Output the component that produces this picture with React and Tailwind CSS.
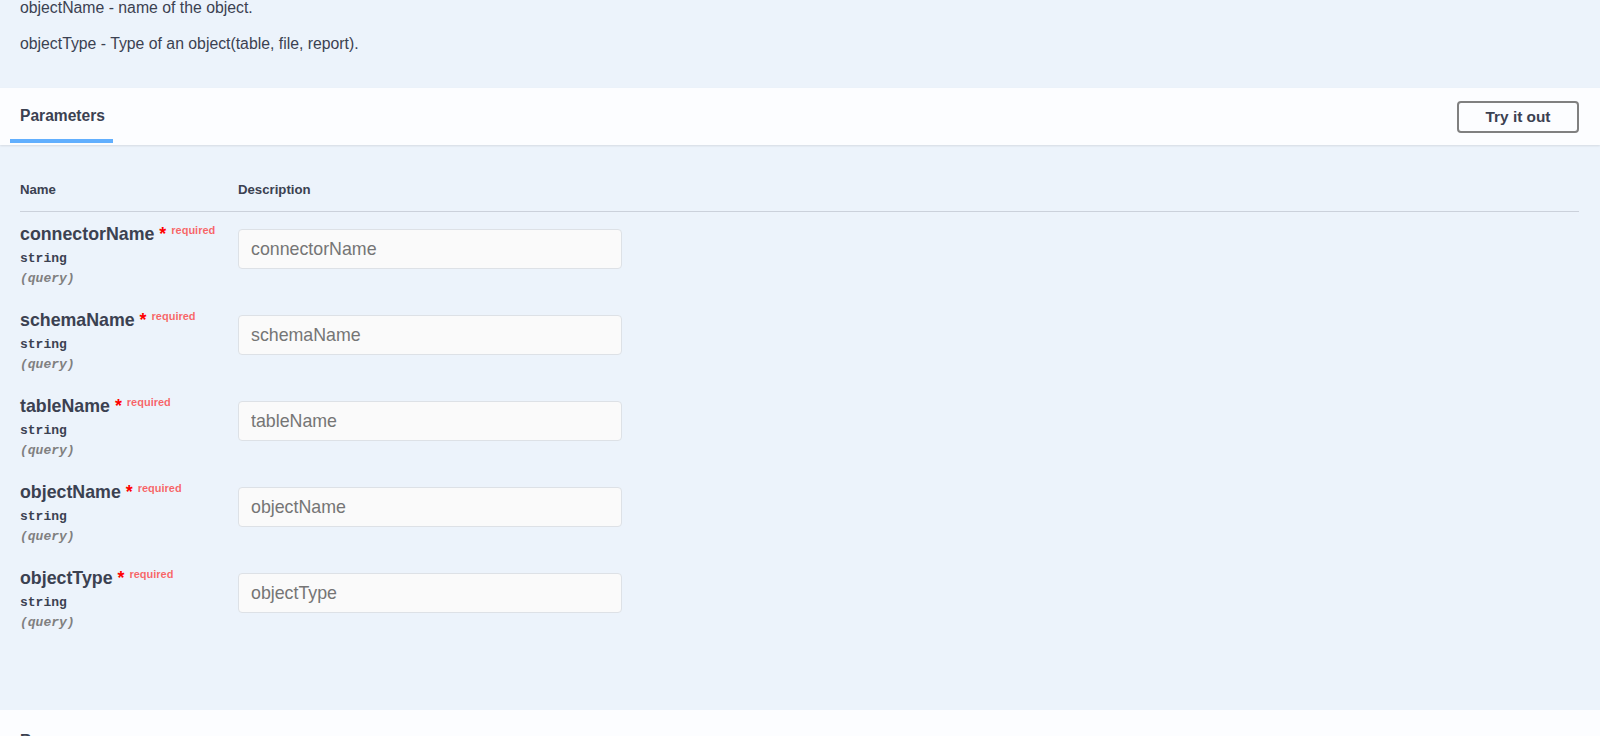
import React from 'react';

const params = [
  { name: 'connectorName' },
  { name: 'schemaName' },
  { name: 'tableName' },
  { name: 'objectName' },
  { name: 'objectType' },
];

const ParamRow = ({ name }) => (
  <div className="grid grid-cols-[218px_1fr] pb-[23px]">
    <div>
      <div className="h-[20px] text-[17.8px] leading-[20px] font-bold text-[#3b4151] whitespace-nowrap">
        {name}
        <span className="text-[#ff0000]">&nbsp;*</span>
        <span className="text-[11px] leading-[0] font-bold text-[rgba(255,0,0,0.6)] px-[5px] align-[6px]">required</span>
      </div>
      <div className="mt-[7px] text-[13px] leading-[16px] font-bold text-[#3b4151] font-['Liberation_Mono',monospace]">
        string
      </div>
      <div className="mt-[4px] text-[13px] leading-[16px] font-bold italic text-[#808080] font-['Liberation_Mono',monospace]">
        (query)
      </div>
    </div>
    <div>
      <input
        type="text"
        placeholder={name}
        className="mt-[5px] block w-[384px] h-[40px] px-[12px] bg-[#fafafa] border border-[#dde1e6] rounded-[4px] text-[17.8px] text-[#3b4151] placeholder:text-[#757575] outline-none"
      />
    </div>
  </div>
);

export default function App() {
  return (
    <div className="w-full h-[736px] overflow-hidden bg-[#ecf3fb] font-['Liberation_Sans',Arial,sans-serif] text-[#3b4151]">
      {/* description tail */}
      <div className="px-[20px] pb-[35px]">
        <p className="-mt-px text-[15.8px] leading-[18px]">objectName - name of the object.</p>
        <p className="mt-[18px] text-[15.8px] leading-[18px]">objectType - Type of an object(table, file, report).</p>
      </div>

      {/* section header */}
      <div className="h-[57px] bg-[#fcfdff] shadow-[0_1px_2px_rgba(0,0,0,0.1)] flex items-start justify-between">
        <div className="ml-[10px] pt-[18px]">
          <div className="px-[10px] text-[15.6px] leading-[20px] font-bold">Parameters</div>
          <div className="mt-[13px] h-[4px] w-[103px] bg-[#61affe]" />
        </div>
        <button className="mt-[13px] mr-[21px] h-[32px] w-[122px] border-2 border-[#808080] rounded-[4px] bg-transparent text-[15.4px] font-bold text-[#3b4151]">
          Try it out
        </button>
      </div>

      {/* parameters table */}
      <div className="pl-[20px] pr-[21px] pb-[56px]">
        <div className="grid grid-cols-[218px_1fr] pt-[37px] pb-[13px] border-b border-[#cbd1db] text-[13.2px] leading-[16px] font-bold">
          <div>Name</div>
          <div>Description</div>
        </div>
        <div className="pt-[12px]">
          {params.map((p) => (
            <ParamRow key={p.name} name={p.name} />
          ))}
        </div>
      </div>

      {/* responses header */}
      <div className="h-[60px] bg-[#fcfdff] px-[20px] pt-[19px]">
        <div className="text-[15.4px] leading-[20px] font-bold">Responses</div>
      </div>
    </div>
  );
}
